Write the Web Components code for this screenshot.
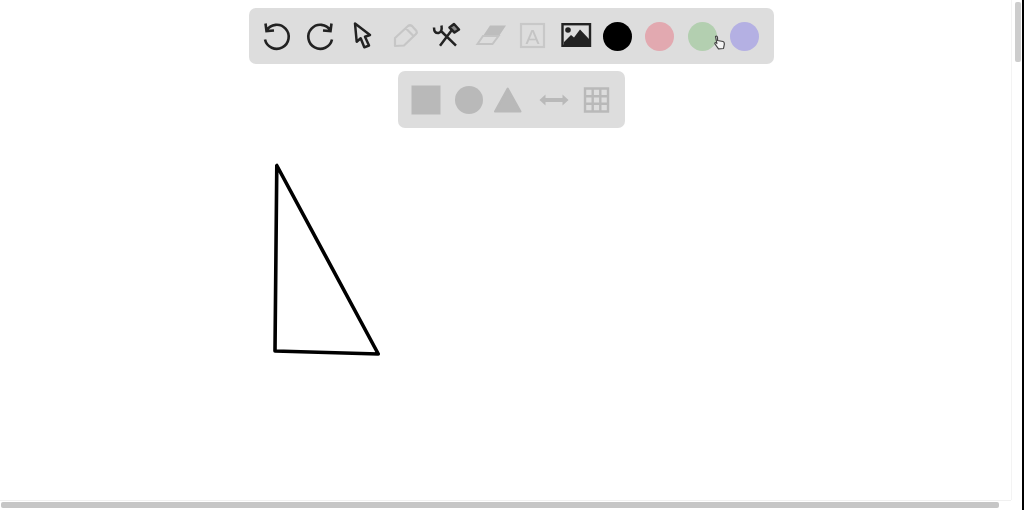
<!DOCTYPE html>
<html lang="en"><head><meta charset="utf-8"><title>Whiteboard</title>
<style>html,body{margin:0;padding:0;background:#fff;overflow:hidden}</style>
</head><body>
<x-board>
  <x-toolbar>
    <x-tool><svg viewBox="-17 -17 34 34"><path d="M-10.5 -5.5A12 12 0 1 1-12 3.5M-11.5 -12.5L-10.5 -5L-3 -5.5" fill="none" stroke="#222" stroke-width="2.6"/></svg></x-tool>
    <x-tool><svg viewBox="-17 -17 34 34"><path d="M10.5 -5.5A12 12 0 1 0 12 3.5M11.5 -12.5L10.5 -5L3 -5.5" fill="none" stroke="#222" stroke-width="2.6"/></svg></x-tool>
    <x-tool><svg viewBox="-17 -17 34 34"><path d="M-7 -12.5L-5.3 5.7L-1.3 2.3L2.3 11.3L7 9.5L3 .7L8 -1Z" fill="none" stroke="#222" stroke-width="2.5" stroke-linejoin="round"/></svg></x-tool>
    <x-tool><svg viewBox="-17 -17 34 34"><path d="M-10 10L-10 2L3 -10Q5 -11.5 7 -10L11.5 -5Q12.5 -3.5 11 -2L-1 9.5ZM1 -7.5L8.5 0" fill="none" stroke="#c6c6c6" stroke-width="2.2" stroke-linejoin="round"/></svg></x-tool>
    <x-tool><svg viewBox="-17 -17 34 34"><g fill="none" stroke="#222" stroke-width="2.5"><path d="M-7 9.7L6 -7.5M9 9.7L-6.5 -5.5M-13 -8.5Q-13 -2.5 -8.5 -3Q-4.5 -4 -5.5 -10.5"/><path d="M2.5 -8.5L7 -12L12 -6.5L7.5 -3.5Z" stroke-linejoin="round" fill="#888"/></g></svg></x-tool>
    <x-tool><svg viewBox="-17 -17 34 34"><path d="M0 -10.5L16 -10.5L9 0L-7 0Z" fill="#bdbdbd"/><path d="M-7 0L8.5 0L2.5 8L-12.5 8Z" fill="none" stroke="#c4c4c4" stroke-width="2"/></svg></x-tool>
    <x-tool><svg viewBox="-17 -17 34 34"><rect x="-11" y="-12" width="23" height="23" fill="none" stroke="#c8c8c8" stroke-width="2.2"/><text x=".5" y="7.5" text-anchor="middle" font-family="Liberation Sans, sans-serif" font-size="21" fill="#c4c4c4">A</text></svg></x-tool>
    <x-tool><svg viewBox="-17 -17 34 34"><rect x="-12.5" y="-11.8" width="27.5" height="21.6" fill="none" stroke="#222" stroke-width="2.4"/><circle cx="-7" cy="-6" r="2.8" fill="#222"/><path d="M-11 9L-11 6L-4 -1L-1 1.5L5 -6.5L14 3L14 9Z" fill="#222"/></svg></x-tool>
    <x-swatch color="#000"></x-swatch>
    <x-swatch color="#e2a9b0"></x-swatch>
    <x-swatch color="#b3cfb0"></x-swatch>
    <x-swatch color="#b4b0e3"></x-swatch>
    <x-pointer></x-pointer>
  </x-toolbar>
  <x-toolbar tall>
    <x-tool><svg viewBox="-17 -17 34 34"><rect x="-14.5" y="-14.5" width="29" height="29" fill="#b9b9b9"/></svg></x-tool>
    <x-tool><svg viewBox="-17 -17 34 34"><circle r="14" fill="#b9b9b9"/></svg></x-tool>
    <x-tool><svg viewBox="-17 -17 34 34"><path d="M-3.3 -11.5L-16 11.5L9.5 11.5Z" fill="#b9b9b9" stroke="#b9b9b9" stroke-width="2" stroke-linejoin="round"/></svg></x-tool>
    <x-tool><svg viewBox="-17 -17 34 34"><path d="M-11 0L11 0" stroke="#b9b9b9" stroke-width="4"/><path d="M-14.5 0L-8.5 -5.5L-8.5 5.5ZM14.5 0L8.5 -5.5L8.5 5.5Z" fill="#b9b9b9"/></svg></x-tool>
    <x-tool><svg viewBox="-17 -17 34 34"><path d="M-11 -11.5H12V11.5H-11ZM-3.3 -11.5V11.5M4.3 -11.5V11.5M-11 -3.8H12M-11 3.8H12" fill="none" stroke="#b9b9b9" stroke-width="2.4"/></svg></x-tool>
  </x-toolbar>
  <x-canvas>
    <svg viewBox="0 128 1024 382"><path d="M276.8 165.5L275 351L378.3 354Z" fill="none" stroke="#000" stroke-width="3.6" stroke-linejoin="round"/></svg>
  </x-canvas>
  <x-scrollbar orient="v"></x-scrollbar>
  <x-scrollbar orient="h"></x-scrollbar>
  <x-edge></x-edge>
</x-board>
<script>
function def(name, css, html){
  customElements.define(name, class extends HTMLElement{
    constructor(){super();this.attachShadow({mode:'open'}).innerHTML='<style>'+css+'</style>'+(html||'<slot></slot>');}
    connectedCallback(){
      var c=this.getAttribute('color'); if(c)this.style.setProperty('--c',c);
    }
  });
}
def('x-board',':host{display:flex;flex-direction:column;align-items:center;gap:7px;box-sizing:border-box;position:relative;width:1024px;height:510px;padding:8px 1px 0 0;overflow:hidden;font-family:"Liberation Sans",sans-serif}');
def('x-toolbar',':host{display:flex;position:relative;padding:0 8px 0 7px;background:#dddddd;border-radius:7px;height:56px;filter:blur(.4px)}:host([tall]){height:57px}');
def('x-tool',':host{display:flex;align-items:center;justify-content:center;width:42.5px}::slotted(svg){width:34px;height:34px;overflow:visible;display:block}');
def('x-swatch',':host{display:flex;align-items:center;justify-content:center;width:42.5px}i{display:block;width:29px;height:29px;border-radius:50%;background:var(--c)}','<i></i>');
def('x-pointer',':host{position:absolute;left:465px;top:27px;width:12px;height:15px;display:block}svg{display:block}','<svg width="12" height="15" viewBox="0 0 12 15"><path d="M1.5 1.5C2.5 .8 3.5 1.3 3.5 2.5L3.6 5.5L9 6.5C10.3 7 10.5 8 10.3 9.5L9.5 13.5L4.5 13.8L1 9C.5 8 1.5 7.3 2.5 8L2.9 8.5Z" fill="#f4f4f4" stroke="#444" stroke-width="1.2" stroke-linejoin="round"/></svg>');
def('x-canvas',':host{display:block;position:absolute;left:0;top:128px;width:1024px;height:382px;filter:blur(.35px)}::slotted(svg){display:block;width:1024px;height:382px}');
def('x-scrollbar',':host{display:block;position:absolute;box-sizing:border-box}:host([orient=v]){left:1011px;top:0;width:11px;height:500px;border-left:1px solid #f3f3f3;background:#fff}:host([orient=h]){left:0;top:500px;width:1011px;height:10px;border-top:1px solid #f0f0f0;background:#fff}i{position:absolute;display:block;border-radius:2px}:host([orient=v]) i{left:3px;top:2px;width:6px;height:60px;background:#cdcdcd}:host([orient=h]) i{left:1px;top:1px;width:998px;height:6px;background:#c6c6c6}','<i></i>');
def('x-edge',':host{display:block;position:absolute;left:1022px;top:0;width:2px;height:510px;background:#000}','');
</script>
</body></html>
